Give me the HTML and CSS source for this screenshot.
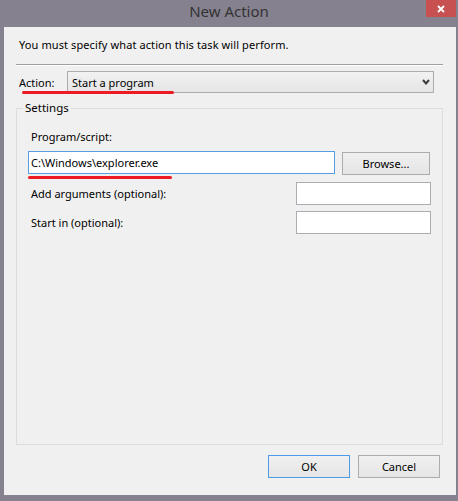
FILE: index.html
```html
<!DOCTYPE html>
<html lang="en">

<head>
    <meta charset="UTF-8">
    <meta name="viewport" content="width=device-width, initial-scale=1.0">
    <title>New Action</title>
    <link rel="stylesheet" href="styles.css">
</head>

<body>
    <div class="window">
        <div class="titlebar">
            <span></span>
            <span class="title">New Action</span>
            <span class="close-cell">
                <button class="close" aria-label="Close">
                    <svg width="8" height="8" viewBox="0 0 8 8">
                        <path d="M1 1 L7 7 M7 1 L1 7" stroke="#fff" stroke-width="1.8" fill="none" />
                    </svg>
                </button>
            </span>
        </div>

        <div class="client">
            <p class="intro">You must specify what action this task will perform.</p>
            <div class="separator"></div>

            <div class="action-row">
                <label class="action-label">Action:</label>
                <div class="combo">
                    <span>Start a program</span>
                    <svg width="8" height="6" viewBox="0 0 8 6">
                        <polyline points="1,1 4,4.5 7,1" stroke="#3c3c3c" stroke-width="2" fill="none" />
                    </svg>
                </div>
                <!-- red marker drawn over the screenshot -->
                <span class="mark mark-action"></span>
            </div>

            <fieldset class="settings">
                <legend>Settings</legend>
                <div class="settings-body">
                    <label class="field-label">Program/script:</label>
                    <div class="program-row">
                        <input type="text" class="text-input program-input" value="C:\Windows\explorer.exe">
                        <button class="btn browse">Browse...</button>
                        <span class="mark mark-program"></span>
                    </div>
                    <div class="opt-row">
                        <label>Add arguments (optional):</label>
                        <input type="text" class="text-input small-input">
                    </div>
                    <div class="opt-row start-row">
                        <label>Start in (optional):</label>
                        <input type="text" class="text-input small-input">
                    </div>
                </div>
            </fieldset>

            <div class="footer">
                <button class="btn btn-default">OK</button>
                <button class="btn">Cancel</button>
            </div>
        </div>
    </div>
</body>

</html>
```

FILE: styles.css
```css
body {
    margin: 0;
    background-color: #85818f;
    font-family: "Noto Sans", "Open Sans", sans-serif;
    font-size: 11px;
    color: #000;
}

.window {
    width: 458px;
    height: 501px;
    display: flex;
    flex-direction: column;
}

/* title bar */
.titlebar {
    height: 27px;
    display: grid;
    grid-template-columns: 1fr auto 1fr;
    align-items: start;
    flex-shrink: 0;
}

.title {
    font-size: 15px;
    line-height: 22px;
    color: #333;
}

.close-cell {
    display: flex;
    justify-content: flex-end;
}

.close {
    width: 30px;
    height: 17px;
    margin-right: 2px;
    border: none;
    padding: 0;
    background-color: #c75050;
    display: flex;
    align-items: center;
    justify-content: center;
}

/* dialog body */
.client {
    flex: 1;
    margin: 0 2px 6px 4px;
    padding: 0 13px 0 12px;
    background-color: #f0f0f0;
    display: flex;
    flex-direction: column;
    min-height: 0;
}

.intro {
    margin: 11px 0 0 3px;
    line-height: 14px;
    letter-spacing: 0.1px;
}

.separator {
    margin-top: 12px;
    height: 1px;
    background-color: #a0a0a0;
    border-bottom: 1px solid #fff;
}

.action-row {
    position: relative;
    margin-top: 5px;
    display: flex;
    align-items: center;
    height: 22px;
}

.action-label {
    width: 48px;
    padding-left: 3px;
}

.combo {
    width: 367px;
    height: 22px;
    box-sizing: border-box;
    border: 1px solid #acacac;
    background: linear-gradient(#f2f2f2, #e5e5e5);
    padding: 0 3px 0 4px;
    display: flex;
    align-items: center;
    justify-content: space-between;
}

.mark {
    position: absolute;
    height: 3px;
    background-color: #ed1c24;
    border-radius: 2px;
}

.mark-action {
    left: 6px;
    top: 20px;
    width: 152px;
}

/* settings group */
.settings {
    flex: 1;
    min-height: 0;
    margin: 7px 0 0 0;
    padding: 0;
    border: 1px solid #dcdcdc;
}

.settings legend {
    margin-left: 6px;
    padding: 0 2px;
    line-height: 16px;
    font-size: 11.5px;
}

.settings-body {
    padding: 0 11px;
    display: flex;
    flex-direction: column;
}

.field-label {
    margin-top: 14px;
    padding-left: 3px;
    line-height: 14px;
}

.program-row {
    position: relative;
    margin-top: 7px;
    display: flex;
    align-items: flex-start;
    gap: 7px;
}

.mark-program {
    left: 0;
    top: 25px;
    width: 144px;
}

.opt-row {
    margin-top: 7px;
    display: flex;
    justify-content: space-between;
    align-items: center;
}

.opt-row label {
    padding-left: 3px;
}

.start-row {
    margin-top: 6px;
}

.text-input {
    height: 23px;
    box-sizing: border-box;
    border: 1px solid #abadb3;
    background-color: #fff;
    padding: 0 2px;
    font-family: inherit;
    font-size: 11px;
    outline: none;
    margin: 0;
}

.program-input {
    width: 307px;
    border-color: #569de5;
}

.small-input {
    width: 135px;
}

/* buttons */
.btn {
    height: 23px;
    box-sizing: border-box;
    border: 1px solid #acacac;
    background: linear-gradient(#f0f0f0, #e5e5e5);
    font-family: inherit;
    font-size: 11px;
    color: #000;
    padding: 0;
    margin: 0;
}

.browse {
    width: 88px;
    margin-top: 1px;
}

.btn-default {
    border-color: #4d9be6;
}

.footer {
    margin: 10px 3px 17px 0;
    display: flex;
    justify-content: flex-end;
    gap: 8px;
}

.footer .btn {
    width: 82px;
}
```
